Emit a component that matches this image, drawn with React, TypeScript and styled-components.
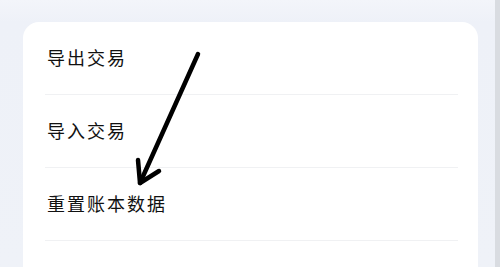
import styled, { createGlobalStyle } from 'styled-components';

const GlobalStyle = createGlobalStyle`
  html, body {
    margin: 0;
    padding: 0;
    background: #eff2f8;
  }
  body {
    font-family: 'Noto Sans CJK SC', 'Noto Sans', sans-serif;
  }
`;

const Screen = styled.div`
  display: flex;
  width: 500px;
  height: 267px;
  overflow: hidden;
  background: linear-gradient(#f3f5fa 0, #eef1f8 22px, #eff2f8 100%);
`;

const Main = styled.main`
  position: relative;
  flex: 1;
  padding: 22px 17px 0 23px;
`;

const ScrollEdge = styled.div`
  width: 5px;
  background: #d9dce1;
`;

const Card = styled.section`
  background: #ffffff;
  border-radius: 16px;
  padding: 0 20px 0 22px;
`;

const Row = styled.div`
  display: flex;
  align-items: center;
  height: 72px;
  border-bottom: 1.5px solid #f0f1f3;
`;

const Label = styled.span`
  font-size: 18px;
  font-weight: 400;
  letter-spacing: 2px;
  color: #111;
  padding: 0 0 3px 2px;
`;

const Arrow = styled.svg`
  position: absolute;
  left: 130px;
  top: 48px;
  pointer-events: none;
`;

const items = ['导出交易', '导入交易', '重置账本数据'];

export default function App() {
  return (
    <>
      <GlobalStyle />
      <Screen>
        <Main>
          <Card>
            {items.map((label) => (
              <Row key={label}>
                <Label>{label}</Label>
              </Row>
            ))}
            <Row />
          </Card>
          <Arrow width="80" height="145" viewBox="0 0 80 145">
            <g fill="none" stroke="#000" strokeWidth="4.5" strokeLinecap="round" strokeLinejoin="round">
              <path d="M68 6 L10 135" />
              <path d="M8 112 L10 135 L29 123" />
            </g>
          </Arrow>
        </Main>
        <ScrollEdge />
      </Screen>
    </>
  );
}
